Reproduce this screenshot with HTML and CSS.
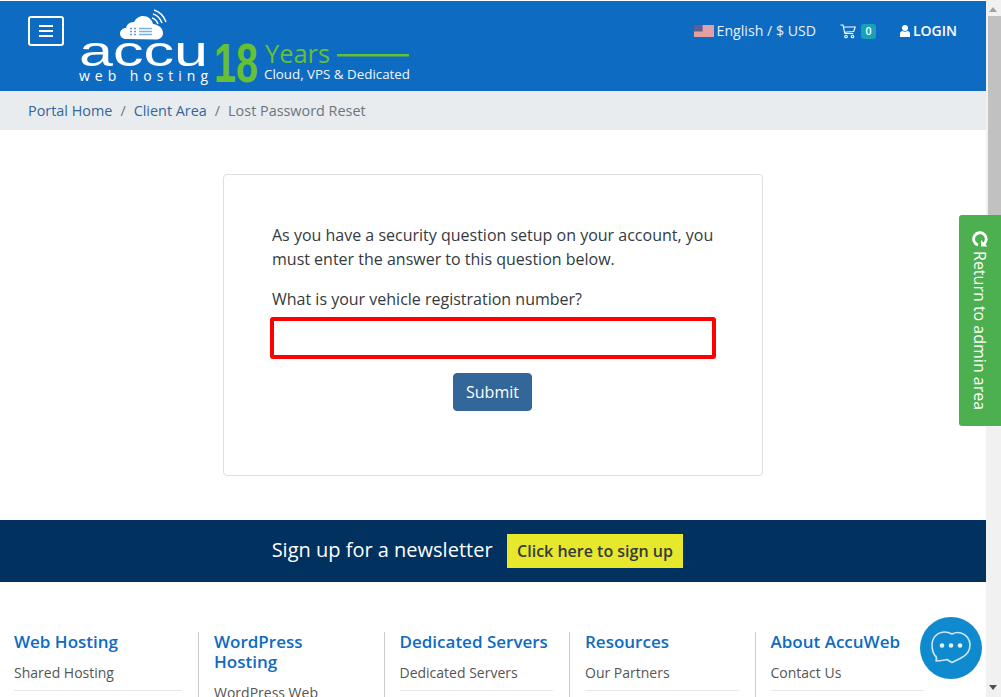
FILE: index.html
```html
<!DOCTYPE html>
<html lang="en">
<head>
<meta charset="utf-8">
<title>Lost Password Reset</title>
<link rel="stylesheet" href="styles.css">
</head>
<body>
<div class="page">
  <header class="topbar">
    <div class="brand">
      <button class="menu-btn" aria-label="Menu">
        <svg width="14" height="12" viewBox="0 0 14 12"><path d="M0 1h14M0 6h14M0 11h14" stroke="#fff" stroke-width="2"/></svg>
      </button>
      <svg class="logo" width="335" height="84" viewBox="0 0 335 84">
        <path fill="#fff" d="M47 31c-3.500 0-6-2.500-6-5.500 0-3 2.500-5.500 6-5.500 1-4 4-6 8-6 2-3.500 5-6 9-6 5 0 9 3.500 10 8 5 .5 10 4 10 9 0 4-3 6.500-7 6.500z"/>
        <g fill="none" stroke="#fff" stroke-width="1.400">
          <path d="M73 10c3 1 5 3 6 6M74 6c4 1 7 4 9 9M75 2c6 2 10 6 12 12"/>
        </g>
        <path d="M51 20.500h2M51 23.500h2M51 26.500h2M55 20.500h2M55 23.500h2M55 26.500h2" stroke="#5b9bdc" stroke-width="1.500"/>
        <path d="M60 20.500h13M60 23.500h13M60 26.500h13" stroke="#7db0e4" stroke-width="1.500"/>
        <text class="logo-accu" x="0" y="58" textLength="129" lengthAdjust="spacingAndGlyphs">accu</text>
        <text class="logo-web" x="0" y="73" textLength="129">web hosting</text>
        <text class="logo-18" x="135" y="74" textLength="44" lengthAdjust="spacingAndGlyphs">18</text>
        <text class="logo-years" x="186" y="54.500" textLength="65" lengthAdjust="spacingAndGlyphs">Years</text>
        <rect x="258" y="46" width="72" height="2.500" fill="#66c033"/>
        <text class="logo-sub" x="185" y="71" textLength="146" lengthAdjust="spacingAndGlyphs">Cloud, VPS &amp; Dedicated</text>
      </svg>
    </div>
    <nav class="topnav">
      <a class="lang">
        <svg width="20" height="12" viewBox="0 0 21 12" preserveAspectRatio="none">
          <rect width="21" height="12" fill="#eebcc0"/>
          <path d="M0 1h21M0 3h21M0 5h21M0 7h21M0 9h21M0 11h21" stroke="#d9808a" stroke-width="1"/>
          <rect width="9" height="6.500" fill="#5a5f96"/>
        </svg>
        <span>English / $ USD</span>
      </a>
      <a class="cart">
        <svg width="16" height="15" viewBox="0 0 16 15" fill="none" stroke="#fff" stroke-width="1.100">
          <path d="M.5 1h2.500l1.800 8.500h8.500M3.400 3h11.800l-1.500 4.500-9.400.8"/>
          <circle cx="6" cy="12.500" r="1.300"/><circle cx="12.500" cy="12.500" r="1.300"/>
        </svg>
        <span class="badge">0</span>
      </a>
      <a class="login">
        <svg width="10" height="12" viewBox="0 0 10 12" fill="#fff"><circle cx="5" cy="3" r="3"/><path d="M0 12V8.500C0 7 1.500 6 2.500 6c1.500 1 3.500 1 5 0C8.500 6 10 7 10 8.500V12z"/></svg>
        <span>LOGIN</span>
      </a>
    </nav>
  </header>

  <nav class="crumbs">
    <a>Portal Home</a><span class="sep">/</span><a>Client Area</a><span class="sep">/</span><span class="current">Lost Password Reset</span>
  </nav>

  <main class="content">
    <form class="card">
      <p class="intro">As you have a security question setup on your account, you must enter the answer to this question below.</p>
      <label class="question" for="answer">What is your vehicle registration number?</label>
      <input class="answer" id="answer" type="text">
      <div class="actions"><button class="submit" type="button">Submit</button></div>
    </form>
  </main>

  <section class="newsletter">
    <span class="news-text">Sign up for a newsletter</span>
    <a class="news-btn">Click here to sign up</a>
  </section>

  <footer class="footer">
    <div class="col">
      <h4>Web Hosting</h4>
      <ul><li>Shared Hosting</li><li>Reseller Hosting</li></ul>
    </div>
    <div class="col">
      <h4>WordPress Hosting</h4>
      <ul><li>WordPress Web Hosting</li></ul>
    </div>
    <div class="col">
      <h4>Dedicated Servers</h4>
      <ul><li>Dedicated Servers</li><li>Windows Servers</li></ul>
    </div>
    <div class="col">
      <h4>Resources</h4>
      <ul><li>Our Partners</li><li>Blog</li></ul>
    </div>
    <div class="col">
      <h4>About AccuWeb</h4>
      <ul><li>Contact Us</li><li>About Us</li></ul>
    </div>
  </footer>
</div>

<div class="scrollbar">
  <span class="arrow-up"></span>
  <span class="thumb"></span>
  <span class="arrow-down"></span>
</div>

<a class="admin-tab">
  <svg class="admin-icon" width="16" height="16" viewBox="0 0 16 16" fill="none" stroke="#fff" stroke-width="2.800"><path d="M13.500 5A6.300 6.300 0 1 0 14 10"/><path d="M15.500 .5v6.500H9z" fill="#fff" stroke="none"/></svg>
  <span>Return to admin area</span>
</a>

<a class="chat">
  <svg width="40" height="36" viewBox="0 0 40 36" fill="none">
    <path d="M5 27C1.500 23 1 19 1 15 1 7 7 2 14 2c3 0 5 1 7 2 3-1.500 6-2 9-1 5 1.500 9 6 9 12 0 5-3 10-9 13-4 2-7 3.500-9 4.500-2-1-3.500-2-5-3-3 .5-7 1.500-11 1.500 1-2 1-3 0-5z" stroke="#cfe7f6" stroke-width="1.600" stroke-linejoin="round"/>
    <circle cx="11" cy="15.500" r="2.300" fill="#e6f3fb"/><circle cx="20" cy="15.500" r="2.300" fill="#e6f3fb"/><circle cx="29" cy="15.500" r="2.300" fill="#e6f3fb"/>
  </svg>
</a>
</body>
</html>
```

FILE: styles.css
```css
* { box-sizing: border-box; }
html, body { margin: 0; padding: 0; height: 697px; overflow: hidden; background: #fff; }
body { font-family: "Open Sans", "Noto Sans", sans-serif; font-size: 16px; line-height: 24px; color: #343a40; }
.page { width: 986px; height: 697px; overflow: hidden; padding-top: 1px; }

.topbar { height: 90px; background: #0e6bc2; display: flex; justify-content: space-between; align-items: flex-start; }
.brand { display: flex; align-items: flex-start; padding: 15px 0 0 28px; position: relative; }
.menu-btn { width: 36px; height: 30px; padding: 0; background: transparent; border: 2px solid #fff; border-radius: 3px; display: flex; align-items: center; justify-content: center; }
.logo { position: absolute; left: 79px; top: 7px; }
.logo-accu { font-family: "Liberation Sans", sans-serif; font-size: 42px; fill: #fff; }
.logo-web { font-family: "Open Sans", sans-serif; font-size: 14px; fill: #fff; }
.logo-18 { font-family: "Liberation Sans", sans-serif; font-weight: 700; font-size: 55px; fill: #66c033; }
.logo-years { font-family: "Open Sans", sans-serif; font-size: 25px; fill: #66c033; }
.logo-sub { font-family: "Open Sans", sans-serif; font-size: 13px; fill: #f2f6fb; }

.topnav { display: flex; align-items: center; height: 60px; padding-right: 29px; font-size: 14px; color: #fff; }
.lang { display: flex; align-items: center; gap: 3px; color: #e8f0fa; font-size: 14.150px; }
.cart { display: flex; align-items: center; gap: 5px; margin-left: 24px; }
.badge { background: #17a2b8; color: #fff; font-size: 10.500px; font-weight: 600; line-height: 15px; width: 15px; height: 15px; border-radius: 3px; text-align: center; }
.login { display: flex; align-items: center; gap: 3px; margin-left: 24px; font-weight: 600; }

.crumbs { height: 39px; background: #e9ecef; padding-left: 28px; display: flex; align-items: center; font-size: 14.400px; color: #6c757d; }
.crumbs a { color: #336699; }
.sep { padding: 0 8px; }

.content { height: 390px; padding: 44px 0 0 223px; }
.card { width: 540px; height: 302px; background: #fff; border: 1px solid #dfdfdf; border-radius: 4px; padding: 48px 48px 0; }
.intro { margin: 0 0 16px; }
.question { display: block; }
.answer { display: block; width: 446px; height: 42px; margin: 6px 0 0 -2px; border: 4px solid #f00; border-radius: 3px; background: #fff; outline: none; }
.actions { display: flex; justify-content: center; margin: 14px 0 0 -1px; }
.submit { width: 79px; height: 38px; background: #336699; color: #fff; border: 1px solid #336699; border-radius: 4px; font: inherit; padding: 0; }

.newsletter { height: 62px; background: #00315f; display: flex; align-items: center; justify-content: center; gap: 14px; padding-right: 31px; }
.news-text { color: #fff; font-size: 20px; margin-bottom: 2px; }
.news-btn { background: #e7e82b; color: #343a40; font-weight: 600; height: 34px; line-height: 34px; padding: 0 10.500px; }

.footer { display: flex; padding: 50px 0 0 14px; }
.col { width: 185.500px; padding-right: 16px; border-left: 1px solid #ccc; padding-left: 15px; height: 100px; }
.col:first-child { border-left: 0; padding-left: 0; width: 184px; }
.col h4 { margin: 0 0 10px; color: #0e6bc2; font-size: 17px; line-height: 20px; font-weight: 600; }
.col ul { list-style: none; margin: 0; padding: 0; font-size: 14px; line-height: 21px; color: #555; }
.col li { padding-bottom: 7px; border-bottom: 1px solid #e8e8e8; margin-bottom: 7px; }

.scrollbar { position: fixed; top: 0; right: 0; width: 15px; height: 697px; background: #f1f1f1; }
.thumb { position: absolute; left: 2px; top: 16px; width: 13px; height: 220px; background: #c1c1c1; }
.arrow-up { position: absolute; left: 3px; top: 7px; border: 4px solid transparent; border-top: 0; border-bottom: 5px solid #a3a3a3; }
.arrow-down { position: absolute; left: 3px; bottom: 7px; border: 4px solid transparent; border-bottom: 0; border-top: 5px solid #505050; }

.admin-tab { position: fixed; left: 959px; top: 215px; width: 42px; height: 211px; background: #4caf50; border-radius: 3px 0 0 3px; color: #fff; display: flex; flex-direction: column; align-items: center; padding-top: 16px; gap: 4px; font-size: 16px; }
.admin-icon { transform: rotate(90deg); flex: none; }
.admin-tab span { writing-mode: vertical-rl; line-height: 18px; }

.chat { position: fixed; left: 920px; top: 617px; width: 62px; height: 62px; border-radius: 50%; background: #0f8ace; display: flex; align-items: center; justify-content: center; }
```
